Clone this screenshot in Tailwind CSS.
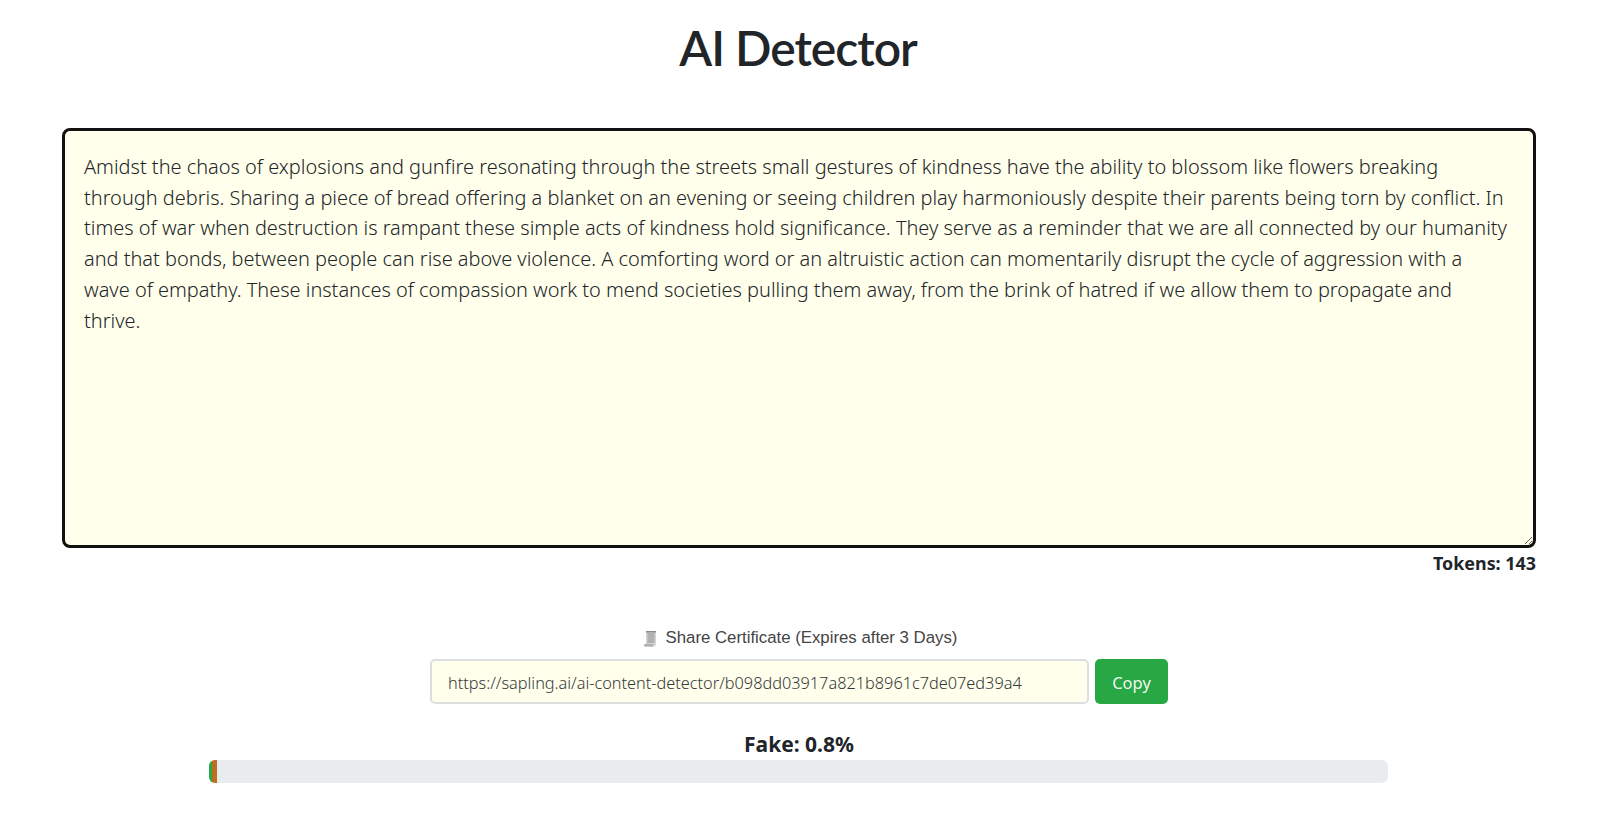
<!DOCTYPE html>
<html lang="en">
<head>
  <meta charset="UTF-8" />
  <meta name="viewport" content="width=device-width, initial-scale=1.0" />
  <title>AI Detector</title>
  <script src="https://cdn.jsdelivr.net/npm/@tailwindcss/browser@4"></script>
</head>
<body class="bg-white text-[#212529] font-['Noto_Sans',sans-serif] h-[818px] overflow-hidden">

  <!-- TITLE -->
  <h1 class="text-center font-['Lato',sans-serif] font-semibold text-[48px] leading-[60px] tracking-[-1px] pt-[18px] mr-[4px]">AI Detector</h1>

  <!-- INPUT -->
  <div class="ml-[62px] mr-[64px] mt-[50px]">
    <textarea spellcheck="false" class="block w-full h-[420px] bg-[#ffffeb] border-[3px] border-[#111] rounded-[8px] pl-[19px] pr-[10px] pt-[21px] text-[19.95px] font-light leading-[30.7px] text-[#212529] outline-none resize-y">Amidst the chaos of explosions and gunfire resonating through the streets small gestures of kindness have the ability to blossom like flowers breaking
through debris. Sharing a piece of bread offering a blanket on an evening or seeing children play harmoniously despite their parents being torn by conflict. In
times of war when destruction is rampant these simple acts of kindness hold significance. They serve as a reminder that we are all connected by our humanity
and that bonds, between people can rise above violence. A comforting word or an altruistic action can momentarily disrupt the cycle of aggression with a
wave of empathy. These instances of compassion work to mend societies pulling them away, from the brink of hatred if we allow them to propagate and
thrive.</textarea>
    <div class="text-right font-bold text-[17.9px] leading-[24px] mt-[3px]">Tokens: 143</div>
  </div>

  <!-- SHARE -->
  <div class="mt-[51px] flex flex-col items-center">
    <div class="flex items-center gap-[9px] font-['Liberation_Sans',sans-serif] text-[16.8px] leading-[24px] text-[#444]">
      <svg width="14" height="17" viewBox="0 0 14 17">
        <path d="M3 1h10v13l-1 2.500H1.500L1 14h2z" fill="#d4d4d4" />
        <path d="M3 1h10v1.500H3z" fill="#8a8a8a" />
        <path d="M4.500 4h7M4.500 6h7M4.500 8h7M4.500 10h7M4.500 12h7" stroke="#8f8f8f" stroke-width="1" />
        <path d="M1 14h9v2.500H1.500z" fill="#b0b0b0" />
      </svg>
      <span>Share Certificate (Expires after 3 Days)</span>
    </div>
    <div class="flex gap-[6px] mt-[9px] mr-[2px]">
      <div class="w-[659px] h-[45px] bg-[#ffffeb] border-2 border-[#dcdfe2] rounded-[5px] pl-[16px] pt-[3px] flex items-center text-[16.3px] font-light text-[#33383d]">https://sapling.ai/ai-content-detector/b098dd03917a821b8961c7de07ed39a4</div>
      <button class="w-[73px] h-[45px] bg-[#28a745] text-white/95 rounded-[5px] pt-[3px] text-[16.5px]">Copy</button>
    </div>
  </div>

  <!-- SCORE -->
  <div class="text-center font-bold text-[21px] leading-[28px] mt-[26px] mr-[2px]">Fake: 0.8%</div>
  <div class="ml-[209px] w-[1179px] h-[23px] mt-[2px] bg-[#e9ecef] rounded-[6px] overflow-hidden flex">
    <div class="w-[3px] bg-[#28a745]"></div>
    <div class="w-[5px] bg-[#bc6f22]"></div>
  </div>

</body>
</html>
